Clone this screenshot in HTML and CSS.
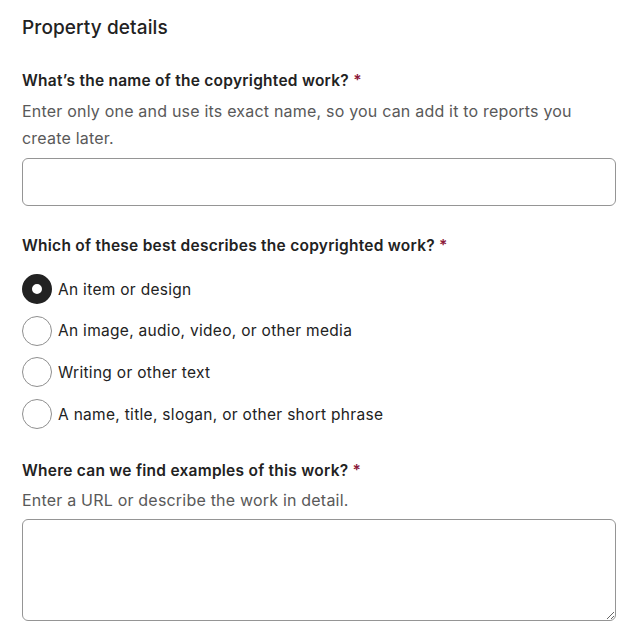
FILE: index.html
```html
<!DOCTYPE html>
<html lang="en">
<head>
<meta charset="utf-8">
<link rel="stylesheet" href="styles.css">
</head>
<body>
<main class="form">
  <h2 class="title">Property details</h2>

  <section class="field first">
    <label class="label" for="work-name">What’s the name of the copyrighted work? <span class="req">*</span></label>
    <p class="help">Enter only one and use its exact name, so you can add it to reports you create later.</p>
    <input class="input" id="work-name" type="text">
  </section>

  <section class="field">
    <div class="label">Which of these best describes the copyrighted work? <span class="req">*</span></div>
    <div class="radios">
      <label class="radio"><input type="radio" name="kind" checked><span class="dot"></span><span class="rtext">An item or design</span></label>
      <label class="radio"><input type="radio" name="kind"><span class="dot"></span><span class="rtext">An image, audio, video, or other media</span></label>
      <label class="radio"><input type="radio" name="kind"><span class="dot"></span><span class="rtext">Writing or other text</span></label>
      <label class="radio"><input type="radio" name="kind"><span class="dot"></span><span class="rtext">A name, title, slogan, or other short phrase</span></label>
    </div>
  </section>

  <section class="field last">
    <label class="label" for="examples">Where can we find examples of this work? <span class="req">*</span></label>
    <p class="help help-tight">Enter a URL or describe the work in detail.</p>
    <textarea class="textarea" id="examples"></textarea>
  </section>
</main>
</body>
</html>
```
FILE: styles.css
```css
* { box-sizing: border-box; }
html, body { margin: 0; padding: 0; background: #fff; }
body {
  font-family: "Inter", "Liberation Sans", sans-serif;
  color: #222222;
}
.form {
  padding: 16px 26px 0 22px;
  display: flex;
  flex-direction: column;
}
.title {
  margin: 0;
  font-size: 19px;
  font-weight: 500;
  line-height: 24px;
  letter-spacing: 0.1px;
}
.field { display: flex; flex-direction: column; margin-top: 29px; }
.field.first { margin-top: 30px; }
.field.last { margin-top: 31px; }
.label {
  font-size: 15.5px;
  font-weight: 600;
  line-height: 22px;
  letter-spacing: 0.25px;
}
.req { color: #8c1a3a; font-weight: 600; }
.help {
  margin: 6px 0 0;
  font-size: 16px;
  line-height: 27px;
  color: #595959;
  letter-spacing: 0.2px;
}
.help-tight { margin-top: 5px; }
.input {
  margin-top: 6px;
  height: 48px;
  border: 1px solid #959595;
  border-radius: 6px;
  width: 100%;
  font: inherit;
}
.radios { display: flex; flex-direction: column; gap: 11.7px; margin-top: 17px; }
.radio { display: flex; align-items: center; gap: 6px; height: 30px; cursor: pointer; }
.radio input { position: absolute; opacity: 0; width: 0; height: 0; }
.dot {
  width: 30px; height: 30px; border-radius: 50%;
  border: 1px solid #8f8f8f;
  flex: none;
  background: #fff;
}
.radio input:checked + .dot {
  border: 10px solid #222222;
  background: #fff;
}
.rtext { font-size: 15.5px; color: #222222; letter-spacing: 0.3px; }
.textarea {
  margin-top: 5px;
  height: 102px;
  border: 1px solid #959595;
  border-radius: 6px;
  width: 100%;
  font: inherit;
  resize: vertical;
}
```
